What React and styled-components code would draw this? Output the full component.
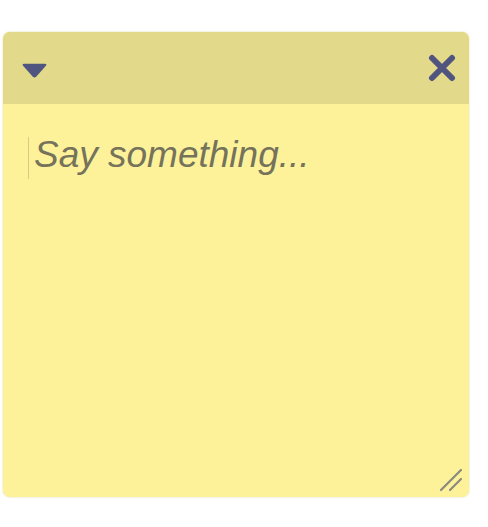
import React from "react";
import styled, { createGlobalStyle } from "styled-components";

const GlobalStyle = createGlobalStyle`
  html, body {
    margin: 0;
    padding: 0;
    background: #ffffff;
    font-family: "Liberation Sans", Arial, sans-serif;
  }
`;

const Page = styled.div`
  padding: 32px 0 0 3px;
  width: 488px;
  height: 527px;
  box-sizing: border-box;
`;

const Note = styled.div`
  position: relative;
  width: 466px;
  height: 465px;
  background: #fdf29a;
  border-radius: 7px;
  box-shadow: 0 0 2px rgba(200, 190, 90, 0.6);
  display: flex;
  flex-direction: column;
  overflow: hidden;
`;

const Header = styled.div`
  height: 72px;
  background: #e3d98b;
  display: flex;
  align-items: center;
  justify-content: space-between;
  padding: 0 13px 0 18px;
  flex-shrink: 0;
`;

const IconButton = styled.button`
  border: none;
  background: none;
  padding: 0;
  margin-top: ${(p) => p.$offset || 0}px;
  display: flex;
  align-items: center;
  cursor: pointer;
`;

const Body = styled.div`
  flex: 1;
  padding: 33px 0 0 25px;
`;

const Editor = styled.div`
  display: flex;
  align-items: flex-start;
  gap: 5px;
`;

const Caret = styled.span`
  width: 1px;
  height: 42px;
  background: #d6cc8a;
`;

const Placeholder = styled.span`
  font-size: 37px;
  font-style: italic;
  color: #75735a;
  line-height: 42px;
  margin-top: -3px;
`;

const Grip = styled.svg`
  position: absolute;
  right: 6px;
  bottom: 5px;
`;

export default function App() {
  return (
    <>
      <GlobalStyle />
      <Page>
        <Note>
          <Header>
            <IconButton $offset={4} aria-label="menu">
              <svg width="27" height="17" viewBox="0 0 26 16">
                <path
                  d="M3 1.5 H23 Q25.5 1.5 23.8 3.6 L14.6 14 Q13 15.6 11.4 14 L2.2 3.6 Q0.5 1.5 3 1.5 Z"
                  fill="#4f557e"
                />
              </svg>
            </IconButton>
            <IconButton aria-label="close">
              <svg width="28" height="28" viewBox="0 0 28 28">
                <path
                  d="M4 4 L24 24 M24 4 L4 24"
                  stroke="#4f557e"
                  strokeWidth="6"
                  strokeLinecap="round"
                />
              </svg>
            </IconButton>
          </Header>
          <Body>
            <Editor>
              <Caret />
              <Placeholder>Say something...</Placeholder>
            </Editor>
          </Body>
          <Grip width="24" height="24" viewBox="0 0 24 24">
            <path
              d="M2 22 L22 2 M11 22 L22 11"
              stroke="#8a8a80"
              strokeWidth="2.2"
              strokeLinecap="round"
            />
          </Grip>
        </Note>
      </Page>
    </>
  );
}
